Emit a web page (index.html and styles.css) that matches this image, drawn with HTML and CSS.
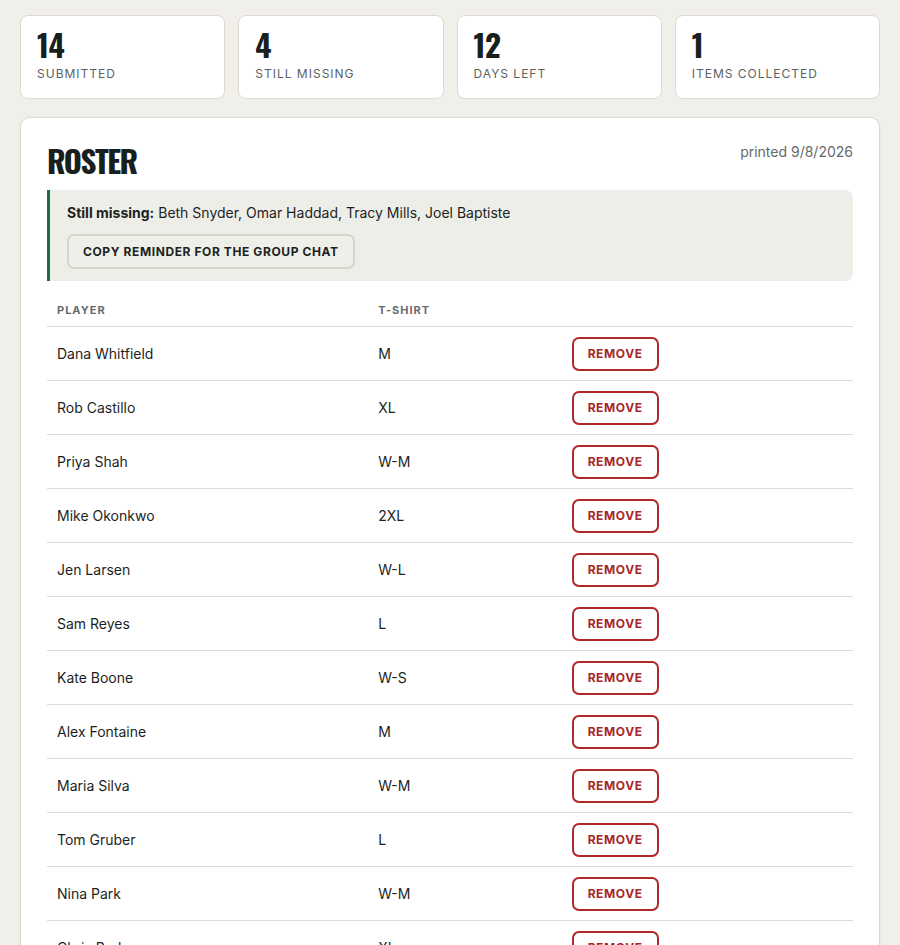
FILE: index.html
```html
<!DOCTYPE html>
<html lang="en">
<head>
<meta charset="utf-8">
<title>Roster</title>
<link rel="stylesheet" href="styles.css">
</head>
<body>
<div class="page">
  <div class="stats">
    <div class="stat"><div class="stat-num">14</div><div class="stat-label">Submitted</div></div>
    <div class="stat"><div class="stat-num">4</div><div class="stat-label">Still missing</div></div>
    <div class="stat"><div class="stat-num">12</div><div class="stat-label">Days left</div></div>
    <div class="stat"><div class="stat-num">1</div><div class="stat-label">Items collected</div></div>
  </div>

  <div class="card">
    <div class="card-head">
      <h1 class="title">Roster</h1>
      <div class="printed">printed 9/8/2026</div>
    </div>
    <div class="missing">
      <p class="missing-text"><strong>Still missing:</strong> Beth Snyder, Omar Haddad, Tracy Mills, Joel Baptiste</p>
      <button class="copy-btn">Copy reminder for the group chat</button>
    </div>
    <table class="roster">
      <thead>
        <tr><th class="c-name">Player</th><th class="c-size">T-shirt</th><th class="c-act"></th></tr>
      </thead>
      <tbody>
        <tr><td>Dana Whitfield</td><td>M</td><td><button class="rm">Remove</button></td></tr>
        <tr><td>Rob Castillo</td><td>XL</td><td><button class="rm">Remove</button></td></tr>
        <tr><td>Priya Shah</td><td>W-M</td><td><button class="rm">Remove</button></td></tr>
        <tr><td>Mike Okonkwo</td><td>2XL</td><td><button class="rm">Remove</button></td></tr>
        <tr><td>Jen Larsen</td><td>W-L</td><td><button class="rm">Remove</button></td></tr>
        <tr><td>Sam Reyes</td><td>L</td><td><button class="rm">Remove</button></td></tr>
        <tr><td>Kate Boone</td><td>W-S</td><td><button class="rm">Remove</button></td></tr>
        <tr><td>Alex Fontaine</td><td>M</td><td><button class="rm">Remove</button></td></tr>
        <tr><td>Maria Silva</td><td>W-M</td><td><button class="rm">Remove</button></td></tr>
        <tr><td>Tom Gruber</td><td>L</td><td><button class="rm">Remove</button></td></tr>
        <tr><td>Nina Park</td><td>W-M</td><td><button class="rm">Remove</button></td></tr>
        <tr><td>Chris Park</td><td>XL</td><td><button class="rm">Remove</button></td></tr>
        <tr><td>Lena Ortiz</td><td>W-S</td><td><button class="rm">Remove</button></td></tr>
      </tbody>
    </table>
  </div>
</div>
</body>
</html>
```

FILE: styles.css
```css
* { box-sizing: border-box; }
html, body { margin: 0; padding: 0; }
body {
  background: #f0efea;
  font-family: Inter, "Noto Sans", "Liberation Sans", sans-serif;
  color: #1d1f1e;
}
.page {
  padding: 15px 20px 40px;
}
.stats {
  display: grid;
  grid-template-columns: repeat(4, 1fr);
  gap: 13px;
  margin-bottom: 18px;
}
.stat {
  background: #fff;
  border: 1px solid #dcdad2;
  border-radius: 8px;
  padding: 10px 16px 16px;
  height: 84px;
}
.stat-num {
  font-family: Oswald, "Liberation Sans Narrow", "DejaVu Sans Condensed", sans-serif;
  font-weight: 700;
  font-size: 31px;
  line-height: 36px;
  letter-spacing: -0.5px;
  color: #17201c;
}
.stat-label {
  font-size: 12px;
  letter-spacing: 1px;
  text-transform: uppercase;
  color: #5a5f63;
  margin-top: 4px;
}
.card {
  background: #fff;
  border: 1px solid #dcdad2;
  border-radius: 10px;
  box-shadow: 0 1px 3px rgba(0,0,0,0.06);
  padding: 24px 26px 20px;
}
.card-head {
  display: flex;
  justify-content: space-between;
  align-items: flex-start;
  margin-bottom: 12px;
}
.title {
  margin: 0;
  font-family: Oswald, "Liberation Sans Narrow", "DejaVu Sans Condensed", sans-serif;
  font-weight: 700;
  font-size: 31px;
  line-height: 36px;
  letter-spacing: -1.5px;
  text-transform: uppercase;
  color: #17201c;
}
.printed {
  font-size: 14px;
  color: #666a6c;
  padding-top: 1px;
}
.missing {
  background: #eeeee9;
  border-left: 3px solid #1e6b45;
  border-radius: 0 8px 8px 0;
  padding: 14px 17px 12px;
  margin-bottom: 22px;
}
.missing-text {
  margin: 0 0 12px;
  font-size: 14px;
  line-height: 18px;
}
.missing-text strong { font-weight: 700; }
.copy-btn {
  font-family: inherit;
  font-size: 12px;
  font-weight: 700;
  letter-spacing: 0.6px;
  text-transform: uppercase;
  color: #1d1f1e;
  background: #efefea;
  border: 2px solid #d6d5cd;
  border-radius: 7px;
  height: 35px;
  padding: 0 14px;
}
.roster {
  width: 100%;
  border-collapse: collapse;
}
.roster th {
  text-align: left;
  font-size: 11px;
  font-weight: 700;
  letter-spacing: 1px;
  text-transform: uppercase;
  color: #666a6c;
  padding: 0 10px 9px;
  border-bottom: 1px solid #dcdad2;
}
.c-name { width: 39.85%; }
.c-size { width: 24%; }
.roster td {
  font-size: 14px;
  padding: 0 10px;
  height: 54px;
  border-bottom: 1px solid #dcdad2;
  color: #1d1f1e;
}
.rm {
  font-family: inherit;
  font-size: 12px;
  font-weight: 700;
  letter-spacing: 0.6px;
  text-transform: uppercase;
  color: #a8262a;
  background: #fff;
  border: 2px solid #b0282a;
  border-radius: 7px;
  width: 87px;
  height: 34px;
  padding: 0;
}
```
